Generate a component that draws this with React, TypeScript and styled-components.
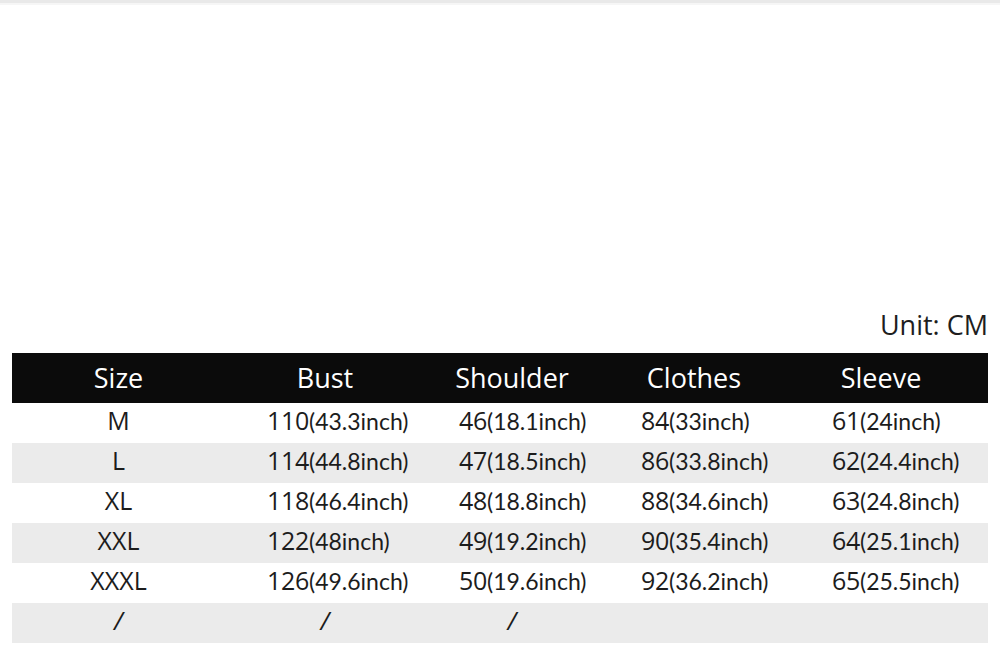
import React from "react";
import styled, { createGlobalStyle } from "styled-components";

const GlobalStyle = createGlobalStyle`
  html, body {
    margin: 0;
    padding: 0;
    background: #ffffff;
  }
  body {
    font-family: "Open Sans", "Noto Sans", sans-serif;
    color: #1c1c1c;
  }
`;

const Page = styled.div`
  width: 1000px;
  height: 647px;
  overflow: hidden;
  display: flex;
  flex-direction: column;
`;

const TopLine = styled.div`
  height: 3px;
  background: #e9e9e9;
  border-bottom: 2px solid #f6f6f6;
`;

const Content = styled.div`
  display: flex;
  flex-direction: column;
  padding: 0 12px;
`;

const UnitLabel = styled.div`
  margin-top: 305px;
  align-self: flex-end;
  font-size: 27px;
  line-height: 30px;
  color: #1e1e1e;
`;

const Table = styled.div`
  margin-top: 13px;
  display: grid;
  grid-template-columns: 213px 200px 174px 190px 184px 1fr;
`;

const HeaderCell = styled.div`
  background: #0b0b0b;
  color: #ffffff;
  height: 50px;
  display: flex;
  align-items: center;
  justify-content: center;
  font-size: 27px;
  padding-bottom: 2px;
  box-sizing: border-box;
`;

const Cell = styled.div<{ $shade: boolean; $indent?: number; $center?: boolean }>`
  background: ${(p) => (p.$shade ? "#ebebeb" : "#ffffff")};
  height: 40px;
  display: flex;
  align-items: center;
  justify-content: ${(p) => (p.$center ? "center" : "flex-start")};
  padding-left: ${(p) => (p.$center ? 0 : p.$indent ?? 0)}px;
  padding-bottom: 6px;
  box-sizing: border-box;
  white-space: nowrap;
`;

const SizeText = styled.span`
  font-size: 25px;
  color: #1c1c1c;
`;

const Num = styled.span`
  font-size: 25px;
  color: #1c1c1c;
  letter-spacing: -0.3px;
`;

const Inch = styled.span`
  font-family: "Lato", "Open Sans", sans-serif;
  font-size: 23px;
  color: #1c1c1c;
  padding-top: 1px;
`;

const Slash = styled.span`
  font-size: 25px;
  color: #1c1c1c;
  font-style: italic;
`;

type Measure = [string, string];

const headers = ["Size", "Bust", "Shoulder", "Clothes", "Sleeve"];
const indents = [42, 34, 42, 43];

const rows: { size: string; values: Measure[] }[] = [
  { size: "M", values: [["110", "(43.3inch)"], ["46", "(18.1inch)"], ["84", "(33inch)"], ["61", "(24inch)"]] },
  { size: "L", values: [["114", "(44.8inch)"], ["47", "(18.5inch)"], ["86", "(33.8inch)"], ["62", "(24.4inch)"]] },
  { size: "XL", values: [["118", "(46.4inch)"], ["48", "(18.8inch)"], ["88", "(34.6inch)"], ["63", "(24.8inch)"]] },
  { size: "XXL", values: [["122", "(48inch)"], ["49", "(19.2inch)"], ["90", "(35.4inch)"], ["64", "(25.1inch)"]] },
  { size: "XXXL", values: [["126", "(49.6inch)"], ["50", "(19.6inch)"], ["92", "(36.2inch)"], ["65", "(25.5inch)"]] },
];

export default function App() {
  return (
    <Page>
      <GlobalStyle />
      <TopLine />
      <Content>
        <UnitLabel>Unit: CM</UnitLabel>
        <Table>
          {headers.map((h) => (
            <HeaderCell key={h}>{h}</HeaderCell>
          ))}
          <HeaderCell />

          {rows.map((row, i) => {
            const shade = i % 2 === 1;
            return (
              <React.Fragment key={row.size}>
                <Cell $shade={shade} $center>
                  <SizeText>{row.size}</SizeText>
                </Cell>
                {row.values.map(([n, inch], j) => (
                  <Cell key={j} $shade={shade} $indent={indents[j]}>
                    <Num>{n}</Num>
                    <Inch>{inch}</Inch>
                  </Cell>
                ))}
                <Cell $shade={shade} />
              </React.Fragment>
            );
          })}

          <Cell $shade $center>
            <Slash>/</Slash>
          </Cell>
          <Cell $shade $center>
            <Slash>/</Slash>
          </Cell>
          <Cell $shade $center>
            <Slash>/</Slash>
          </Cell>
          <Cell $shade />
          <Cell $shade />
          <Cell $shade />
        </Table>
      </Content>
    </Page>
  );
}
